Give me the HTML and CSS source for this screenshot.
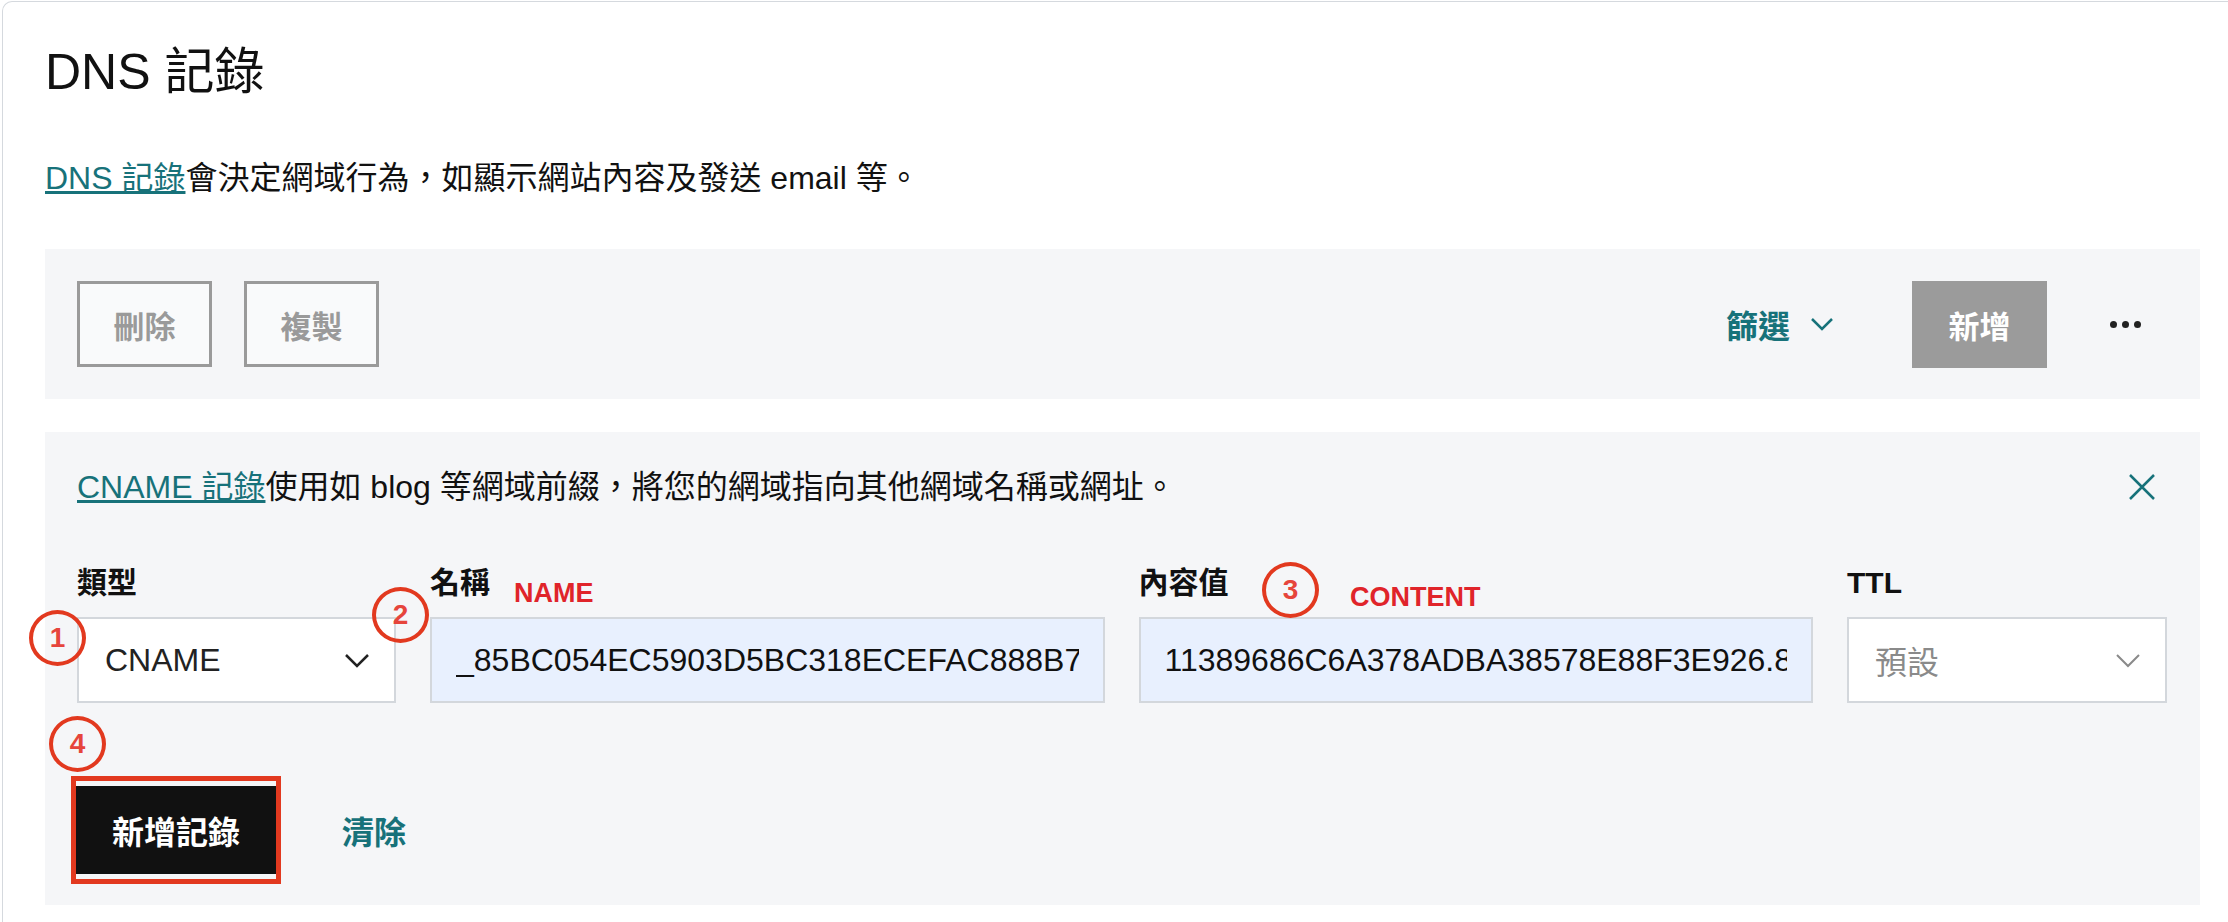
FILE: index.html
```html
<!DOCTYPE html>
<html>
<head>
<meta charset="utf-8" />
<title>DNS 記錄</title>
	<link rel="stylesheet" href="styles.css">
</head>

<body>
	<div class="card">
		<h1 class="title">DNS 記錄</h1>
		<p class="intro"><a href="#">DNS 記錄</a>會決定網域行為，如顯示網站內容及發送 email 等。</p>

		<!-- 工具列 -->
		<div class="toolbar">
			<div class="toolbar-left">
				<button class="btn-outline" disabled>刪除</button>
				<button class="btn-outline" disabled>複製</button>
			</div>
			<div class="toolbar-right">
				<button class="filter">篩選
					<svg width="24" height="14" viewBox="0 0 24 14"><path d="M2 2 L12 12 L22 2" fill="none" stroke="currentColor" stroke-width="2.5"/></svg>
				</button>
				<button class="btn-add" disabled>新增</button>
				<button class="more"><span></span><span></span><span></span></button>
			</div>
		</div>

		<!-- 新增記錄表單 -->
		<div class="form-panel">
			<div class="hint">
				<p><a href="#">CNAME 記錄</a>使用如 blog 等網域前綴，將您的網域指向其他網域名稱或網址。</p>
				<button class="close">
					<svg width="28" height="28" viewBox="0 0 28 28"><path d="M2 2 L26 26 M26 2 L2 26" fill="none" stroke="currentColor" stroke-width="2.5"/></svg>
				</button>
			</div>

			<div class="fields">
				<div class="field">
					<label>類型</label>
					<div class="select">
						<span>CNAME</span>
						<svg width="26" height="15" viewBox="0 0 26 15"><path d="M2 2 L13 13 L24 2" fill="none" stroke="currentColor" stroke-width="2.5"/></svg>
					</div>
				</div>
				<div class="field">
					<label>名稱</label>
					<input class="textbox filled" type="text" value="_85BC054EC5903D5BC318ECEFAC888B7" />
				</div>
				<div class="field">
					<label>內容值</label>
					<input class="textbox filled" type="text" value="11389686C6A378ADBA38578E88F3E926.8" />
				</div>
				<div class="field">
					<label>TTL</label>
					<div class="select placeholder">
						<span>預設</span>
						<svg width="26" height="15" viewBox="0 0 26 15"><path d="M2 2 L13 13 L24 2" fill="none" stroke="currentColor" stroke-width="2"/></svg>
					</div>
				</div>
			</div>

			<div class="actions">
				<button class="btn-primary">新增記錄</button>
				<button class="btn-link">清除</button>
			</div>

			<!-- 標註 -->
			<span class="mark mark-1">1</span>
			<span class="mark mark-2">2</span>
			<span class="mark mark-3">3</span>
			<span class="mark mark-4">4</span>
			<span class="note note-name">NAME</span>
			<span class="note note-content">CONTENT</span>
			<span class="highlight"></span>
		</div>
	</div>
</body>
</html>
```

FILE: styles.css
```css
body {
	margin: 0;
	background: #fff;
	color: #111;
	font-family: "Liberation Sans", "Noto Sans CJK TC", sans-serif;
}
button {
	font-family: inherit;
	cursor: pointer;
}
a {
	color: #17727a;
}

.card {
	margin: 1px 0 0 2px;
	border-left: 1px solid #d5d9de;
	border-top: 1px solid #d5d9de;
	border-top-left-radius: 10px;
	padding: 40px 28px 40px 42px;
}
.title {
	margin: 0;
	font-size: 50px;
	font-weight: normal;
	line-height: 60px;
}
.intro {
	margin: 53px 0 48px;
	font-size: 32px;
	line-height: 46px;
}

/* 工具列 */
.toolbar {
	height: 150px;
	background: #f5f6f8;
	padding: 0 37px 0 32px;
	display: flex;
	align-items: center;
	justify-content: space-between;
}
.toolbar-left {
	display: flex;
	gap: 32px;
}
.btn-outline {
	width: 135px;
	height: 86px;
	border: 3px solid #9a9a9a;
	background: #f9fafb;
	color: #9a9a9a;
	font-size: 31px;
	font-weight: bold;
}
.toolbar-right {
	display: flex;
	align-items: center;
}
.filter {
	display: flex;
	align-items: center;
	gap: 20px;
	border: 0;
	background: none;
	color: #17727a;
	font-size: 32px;
	font-weight: bold;
	padding: 0;
	margin-right: 78px;
}
.btn-add {
	width: 135px;
	height: 87px;
	border: 0;
	background: #9b9b9b;
	color: #fff;
	font-size: 31px;
	font-weight: bold;
}
.more {
	width: 76px;
	height: 60px;
	margin-left: 40px;
	border: 0;
	background: none;
	display: flex;
	align-items: center;
	justify-content: center;
	gap: 5px;
}
.more span {
	width: 7px;
	height: 7px;
	border-radius: 50%;
	background: #222;
}

/* 表單 */
.form-panel {
	position: relative;
	margin-top: 33px;
	background: #f5f6f8;
	padding: 32px 33px 31px 32px;
}
.hint {
	display: flex;
	align-items: center;
	justify-content: space-between;
}
.hint p {
	margin: 0;
	font-size: 32px;
	line-height: 46px;
}
.close {
	border: 0;
	background: none;
	color: #17727a;
	padding: 0;
	margin-right: 11px;
	display: flex;
}
.fields {
	margin-top: 53px;
	display: grid;
	grid-template-columns: 319px 1fr 1fr 320px;
	gap: 34px;
}
.field label {
	display: block;
	font-size: 30px;
	font-weight: bold;
	line-height: 40px;
	margin-bottom: 14px;
}
.select, .textbox {
	box-sizing: border-box;
	width: 100%;
	height: 86px;
	border: 2px solid #d3d7dc;
	font-size: 32px;
}
.select {
	background: #fff;
	display: flex;
	align-items: center;
	justify-content: space-between;
	padding: 0 24px 0 26px;
	color: #222;
}
.select.placeholder {
	color: #8a8a8a;
}
.textbox {
	font-family: inherit;
	color: #111;
	padding: 0 24px;
	outline: none;
}
.textbox.filled {
	background: #e8f0fe;
}
.actions {
	margin-top: 83px;
	display: flex;
	align-items: center;
	gap: 66px;
}
.btn-primary {
	margin-left: -1px;
	width: 200px;
	height: 88px;
	border: 0;
	background: #111;
	color: #fff;
	font-size: 32px;
	font-weight: bold;
}
.btn-link {
	border: 0;
	background: none;
	padding: 0;
	color: #17727a;
	font-size: 32px;
	font-weight: bold;
}

/* 標註 */
.mark {
	position: absolute;
	box-sizing: border-box;
	width: 57px;
	height: 56px;
	border: 4px solid #e2391f;
	border-radius: 50%;
	color: #e6453c;
	font-size: 28px;
	font-weight: bold;
	display: flex;
	align-items: center;
	justify-content: center;
}
.mark-1 { left: -16px; top: 178px; }
.mark-2 { left: 327px; top: 155px; }
.mark-3 { left: 1217px; top: 130px; }
.mark-4 { left: 4px; top: 284px; }
.note {
	position: absolute;
	color: #e0242a;
	font-size: 27px;
	font-weight: bold;
	line-height: 32px;
}
.note-name { left: 469px; top: 145px; }
.note-content { left: 1305px; top: 149px; }
.highlight {
	position: absolute;
	left: 26px;
	top: 344px;
	width: 210px;
	height: 108px;
	box-sizing: border-box;
	border: 5px solid #e2391f;
}
```
